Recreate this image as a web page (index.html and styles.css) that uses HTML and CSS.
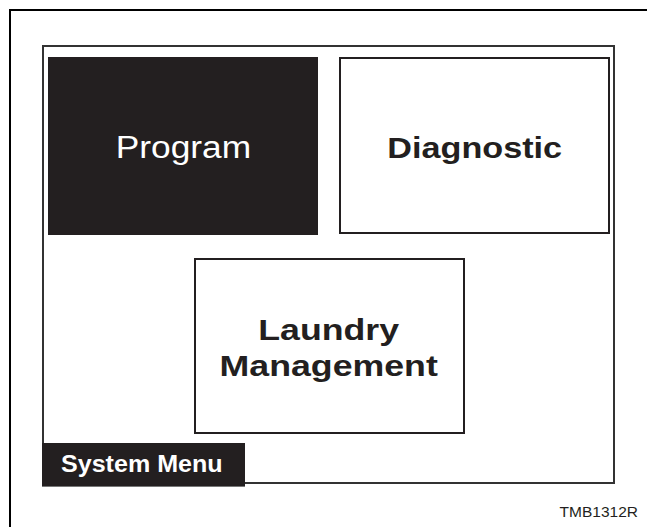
FILE: index.html
```html
<!DOCTYPE html>
<html lang="en">
<head>
  <meta charset="UTF-8">
  <meta name="viewport" content="width=device-width, initial-scale=1.0">
  <title>System Menu</title>
  <link rel="stylesheet" href="styles.css">
</head>
<body>
  <div class="sheet">
    <div class="screen">
      <div class="row">
        <div class="key key-dark"><span class="lbl">Program</span></div>
        <div class="key key-wide"><span class="lbl lbl-bold">Diagnostic</span></div>
      </div>
      <div class="row row-center">
        <div class="key key-low"><span class="lbl lbl-bold lbl-wide">Laundry<br>Management</span></div>
      </div>
      <!-- tab sits over the bottom-left corner of the screen border -->
      <div class="menu-tab"><span class="tab-text">System Menu</span></div>
    </div>
    <div class="ref">TMB1312R</div>
  </div>
</body>
</html>
```

FILE: styles.css
```css
body {
  margin: 0;
  font-family: "Liberation Sans", Arial, sans-serif;
  background-color: #fff;
  color: #231f20;
  overflow: hidden;
}
.sheet {
  margin: 9px 0 0 9px;
  height: 518px;
  box-sizing: border-box;
  border-top: 2px solid #000;
  border-left: 2px solid #000;
  padding: 34px 0 0 31px;
}
.screen {
  position: relative;
  width: 573px;
  height: 439px;
  box-sizing: border-box;
  border: 2px solid #333;
  padding: 10px 3px 0 4px;
}
.row {
  display: flex;
  gap: 21px;
}
.row-center {
  justify-content: center;
  margin-top: 23px;
}
.key {
  width: 270px;
  height: 178px;
  box-sizing: border-box;
  border: 2px solid #231f20;
  display: flex;
  align-items: center;
  justify-content: center;
  padding-top: 4px;
}
.key-dark {
  background-color: #231f20;
  color: #fff;
}
.key-wide {
  width: 271px;
  height: 177px;
}
.key-low {
  width: 271px;
  height: 176px;
}
.lbl {
  display: inline-block;
  font-size: 31px;
  line-height: 36px;
  text-align: center;
  transform: scaleX(1.14);
}
.lbl-bold {
  font-size: 30px;
  font-weight: bold;
}
.lbl-wide {
  transform: scaleX(1.19);
}
.menu-tab {
  position: absolute;
  left: -2px;
  bottom: -5px;
  width: 203px;
  height: 44px;
  box-sizing: border-box;
  background-color: #231f20;
  border-bottom: 1px solid #777;
  color: #fff;
  display: flex;
  align-items: center;
  padding-left: 19px;
}
.tab-text {
  display: inline-block;
  font-size: 23px;
  font-weight: bold;
  transform: scaleX(1.09);
  transform-origin: left center;
}
.ref {
  margin-top: 19px;
  padding-right: 9px;
  text-align: right;
  font-size: 15.5px;
  line-height: 18px;
}
```
